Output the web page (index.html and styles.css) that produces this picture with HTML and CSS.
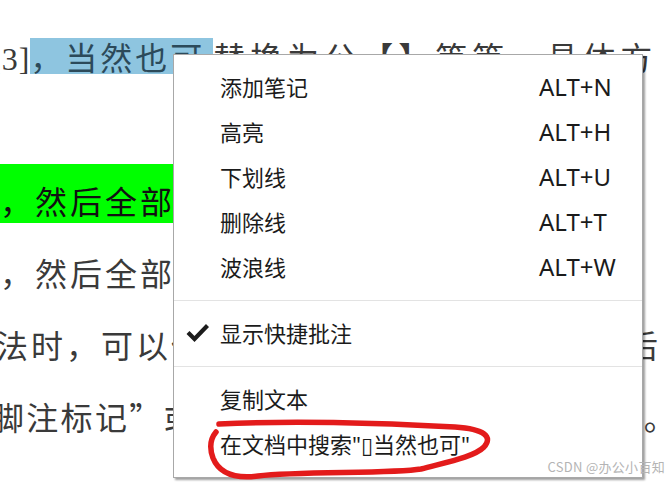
FILE: index.html
```html
<!DOCTYPE html>
<html lang="zh-CN">
<head>
  <meta charset="UTF-8" />
  <title>右键菜单</title>
  <link rel="stylesheet" href="styles.css">
</head>
<body>
  <div class="page">
    <div class="doc">
      <div class="line l1"><span class="ref">[3]</span><span class="sel">，当然也可</span><span class="rest">替换为公【】等等，具体方</span></div>
      <div class="line"></div>
      <div class="line"><span class="mark">，然后全部替换为空白内容</span></div>
      <div class="line">，然后全部删除即可完成</div>
      <div class="line l5">法时，可以使用查找替换功能批量完成之后</div>
      <div class="line l6">脚注标记”或者尾注标记均可以这样处理完。</div>
    </div>

    <div class="menu">
      <div class="group">
        <div class="item"><span></span><span class="label">添加笔记</span><span class="key">ALT+N</span></div>
        <div class="item"><span></span><span class="label">高亮</span><span class="key">ALT+H</span></div>
        <div class="item"><span></span><span class="label">下划线</span><span class="key">ALT+U</span></div>
        <div class="item"><span></span><span class="label">删除线</span><span class="key">ALT+T</span></div>
        <div class="item"><span></span><span class="label">波浪线</span><span class="key">ALT+W</span></div>
      </div>
      <div class="group">
        <div class="item">
          <span class="check">
            <svg width="24" height="20" viewBox="0 0 24 20"><path d="M2 9.5 L8.5 16 L21.5 2.5" fill="none" stroke="#1c1c1c" stroke-width="4.2"/></svg>
          </span>
          <span class="label">显示快捷批注</span><span class="key"></span>
        </div>
      </div>
      <div class="group">
        <div class="item"><span></span><span class="label">复制文本</span><span class="key"></span></div>
        <div class="item"><span></span><span class="label">在文档中搜索"<span class="box">▯</span>当然也可"</span><span class="key"></span></div>
      </div>
    </div>

    <svg class="scribble" width="672" height="483" viewBox="0 0 672 483">
      <path d="M219 424 C300 420 400 424 455 427 C485 429 493 437 484 447 C474 457 447 462 421 469 C392 474 300 471 258 476 C234 479 219 473 213 458 C209 447 211 438 216 432" fill="none" stroke="#e31b1b" stroke-width="5.5" stroke-linecap="round"/>
    </svg>

    <div class="watermark">CSDN @办公小百知</div>
  </div>
</body>
</html>
```

FILE: styles.css
```css
body {
  margin: 0;
  background: #ffffff;
}

.page {
  position: relative;
  width: 672px;
  height: 483px;
  overflow: hidden;
  background: #ffffff;
}

.doc {
  width: 660px;
  padding-top: 20px;
  overflow: hidden;
  font-family: "Noto Sans CJK SC", sans-serif;
  font-size: 32px;
  letter-spacing: 3px;
  color: #3a3a3a;
}

.line {
  height: 72px;
  line-height: 72px;
  white-space: nowrap;
}

.ref {
  font-family: "Liberation Serif", serif;
  letter-spacing: 1px;
}

.l1 {
  text-indent: -10px;
}

.sel {
  display: inline-block;
  text-indent: 0;
  height: 36px;
  line-height: 36px;
  background: #8ec5e0;
  color: #2c4a5a;
  padding-right: 8px;
}

.rest {
  letter-spacing: 5px;
}

.mark {
  display: block;
  width: 470px;
  height: 59px;
  line-height: 72px;
  background: #00ff00;
  color: #111111;
}

.l5 {
  text-indent: -4px;
}

.l6 {
  text-indent: -8px;
  letter-spacing: 2.3px;
}

/* context menu */
.menu {
  position: absolute;
  left: 173px;
  top: 54px;
  width: 468px;
  background: #ffffff;
  border: 1px solid #a8a8a8;
  box-shadow: 2px 2px 2px rgba(0, 0, 0, 0.38);
  font-family: "Noto Sans", "Noto Sans CJK SC", sans-serif;
  font-size: 22px;
  color: #1b1b1b;
}

.group {
  padding: 10px 0;
  border-bottom: 1px solid #e3e3e3;
}

.group:last-child {
  border-bottom: none;
}

.item {
  display: grid;
  grid-template-columns: 46px 319px 1fr;
  align-items: center;
  box-sizing: border-box;
  height: 45px;
  padding-bottom: 3px;
}

.label {
  white-space: nowrap;
}

.key {
  font-size: 24px;
}

.check {
  display: flex;
  padding-left: 12px;
  padding-top: 2px;
}

.box {
  font-family: "DejaVu Sans", sans-serif;
}

.scribble {
  position: absolute;
  left: 0;
  top: 0;
  pointer-events: none;
}

.watermark {
  position: absolute;
  right: 7px;
  bottom: 7px;
  font-family: "Noto Sans CJK SC", sans-serif;
  font-size: 13px;
  color: #b4b4b4;
  letter-spacing: 0.3px;
}
```
